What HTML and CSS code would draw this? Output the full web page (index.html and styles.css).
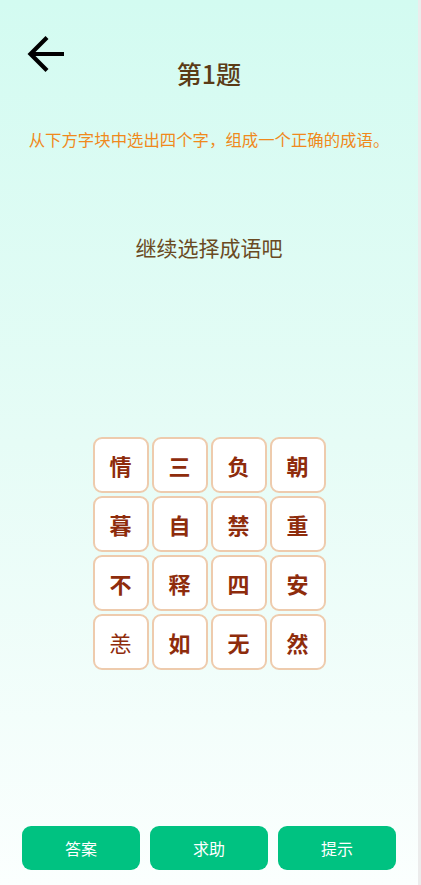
FILE: index.html
```html
<!DOCTYPE html>
<html lang="zh-CN">

<head>
    <meta charset="UTF-8">
    <meta name="viewport" content="width=device-width, initial-scale=1.0">
    <title>第1题</title>
    <link rel="stylesheet" href="styles.css">
</head>

<body>
    <div class="page">
        <header class="top">
            <a class="back" href="#">
                <svg width="38" height="38" viewBox="0 0 38 38">
                    <path d="M37 19H4M20 2.5L3.5 19L20 35.5" fill="none" stroke="#000" stroke-width="4.2" />
                </svg>
            </a>
            <h1 class="title">第1题</h1>
        </header>
        <p class="tip">从下方字块中选出四个字，组成一个正确的成语。</p>
        <p class="status">继续选择成语吧</p>

        <div class="grid">
            <div class="cell">情</div>
            <div class="cell">三</div>
            <div class="cell">负</div>
            <div class="cell">朝</div>
            <div class="cell">暮</div>
            <div class="cell">自</div>
            <div class="cell">禁</div>
            <div class="cell">重</div>
            <div class="cell">不</div>
            <div class="cell">释</div>
            <div class="cell">四</div>
            <div class="cell">安</div>
            <div class="cell light">恙</div>
            <div class="cell">如</div>
            <div class="cell">无</div>
            <div class="cell">然</div>
        </div>

        <div class="actions">
            <button class="btn">答案</button>
            <button class="btn">求助</button>
            <button class="btn">提示</button>
        </div>
    </div>
</body>

</html>
```

FILE: styles.css
```css
* {
    margin: 0;
    padding: 0;
    box-sizing: border-box;
}

body {
    font-family: "Noto Sans CJK SC", "Noto Sans", sans-serif;
    background: #fff;
}

.page {
    width: 421px;
    height: 885px;
    border-right: 3px solid #ececec;
    background: linear-gradient(to bottom, #d3fbf1 0%, #e6fcf6 50%, #fbfffe 100%);
    display: flex;
    flex-direction: column;
    align-items: center;
}

.top {
    width: 100%;
    position: relative;
    padding-top: 53px;
    display: flex;
    justify-content: center;
}

.back {
    position: absolute;
    left: 27px;
    top: 35px;
    display: block;
    width: 38px;
    height: 38px;
}

.title {
    font-size: 25px;
    font-weight: 500;
    color: #5b3b16;
    line-height: 40px;
}

.tip {
    margin-top: 34px;
    font-size: 16.4px;
    color: #f0891c;
    line-height: 24px;
}

.status {
    margin-top: 81px;
    font-size: 21px;
    color: #6a4a22;
    line-height: 30px;
}

.grid {
    margin-top: 175px;
    display: grid;
    grid-template-columns: repeat(4, 56px);
    grid-auto-rows: 56px;
    gap: 3px;
}

.cell {
    background: #fff;
    border: 2px solid #eecbad;
    border-radius: 9px;
    display: flex;
    align-items: center;
    justify-content: center;
    font-size: 22px;
    font-weight: 700;
    color: #8e2c0c;
}

.cell.light {
    font-weight: 400;
}

.actions {
    margin-top: auto;
    margin-bottom: 15px;
    display: flex;
    gap: 10px;
}

.btn {
    width: 118px;
    height: 44px;
    border: none;
    border-radius: 9px;
    background: #00c281;
    color: #fff;
    font-family: inherit;
    font-size: 16px;
}
```
